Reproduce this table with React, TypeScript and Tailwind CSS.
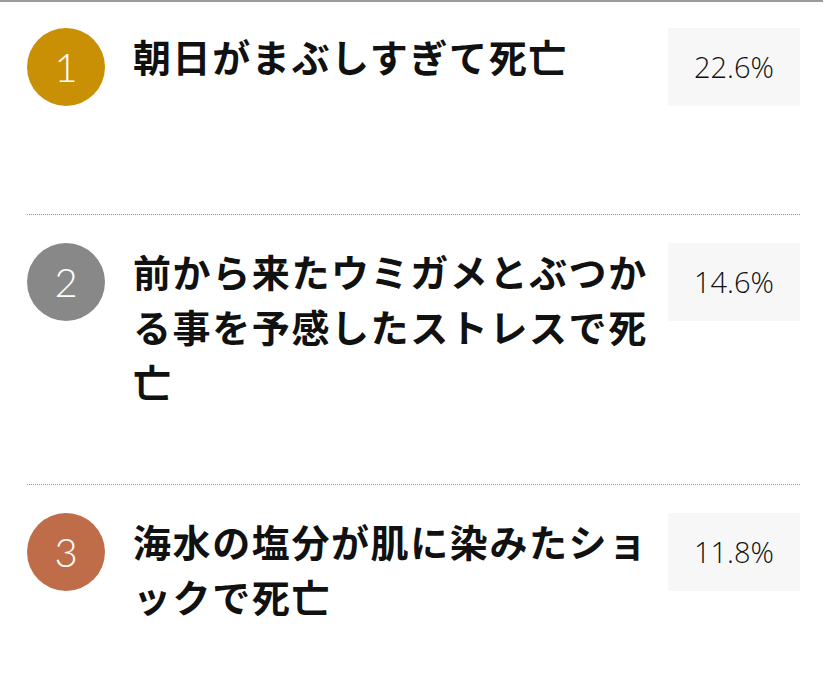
const rows = [
  { rank: "1", color: "bg-[#c98f05]", title: "朝日がまぶしすぎて死亡", rate: "22.6%" },
  { rank: "2", color: "bg-[#888888]", title: "前から来たウミガメとぶつかる事を予感したストレスで死亡", rate: "14.6%" },
  { rank: "3", color: "bg-[#bf6d48]", title: "海水の塩分が肌に染みたショックで死亡", rate: "11.8%" },
];

export default function App() {
  return (
    <div className="min-h-[680px] w-[828px] bg-white">
      <div className="h-[2px] w-[823px] bg-[#9a9a9a]" />
      <ul className="pl-[27px] pr-[28px]">
        {rows.map((row, i) => (
          <li
            key={row.rank}
            className={
              "flex min-h-[213px] items-start pb-[76px] " +
              (i === 0 ? "pt-[26px] " : "pt-[28px] ") +
              (i < rows.length - 1 ? "border-b border-dotted border-[#8f8f8f]" : "")
            }
          >
            <div
              className={
                "flex h-[78px] w-[78px] shrink-0 items-center justify-center rounded-full text-[40px] font-light leading-none text-white " +
                row.color
              }
              style={{ fontFamily: "Lato, 'Open Sans', sans-serif" }}
            >
              {row.rank}
            </div>
            <p
              className="ml-[28px] w-[520px] text-[38px] font-bold leading-[55px] tracking-[1.6px] text-[#111]"
              style={{ fontFamily: "'Noto Sans CJK JP', 'Noto Sans', sans-serif" }}
            >
              {row.title}
            </p>
            <div
              className="ml-auto flex h-[78px] w-[132px] shrink-0 items-center justify-center bg-[#f7f7f7] text-[29px] font-light text-[#111]"
              style={{ fontFamily: "'Open Sans', Lato, sans-serif" }}
            >
              {row.rate}
            </div>
          </li>
        ))}
      </ul>
    </div>
  );
}
